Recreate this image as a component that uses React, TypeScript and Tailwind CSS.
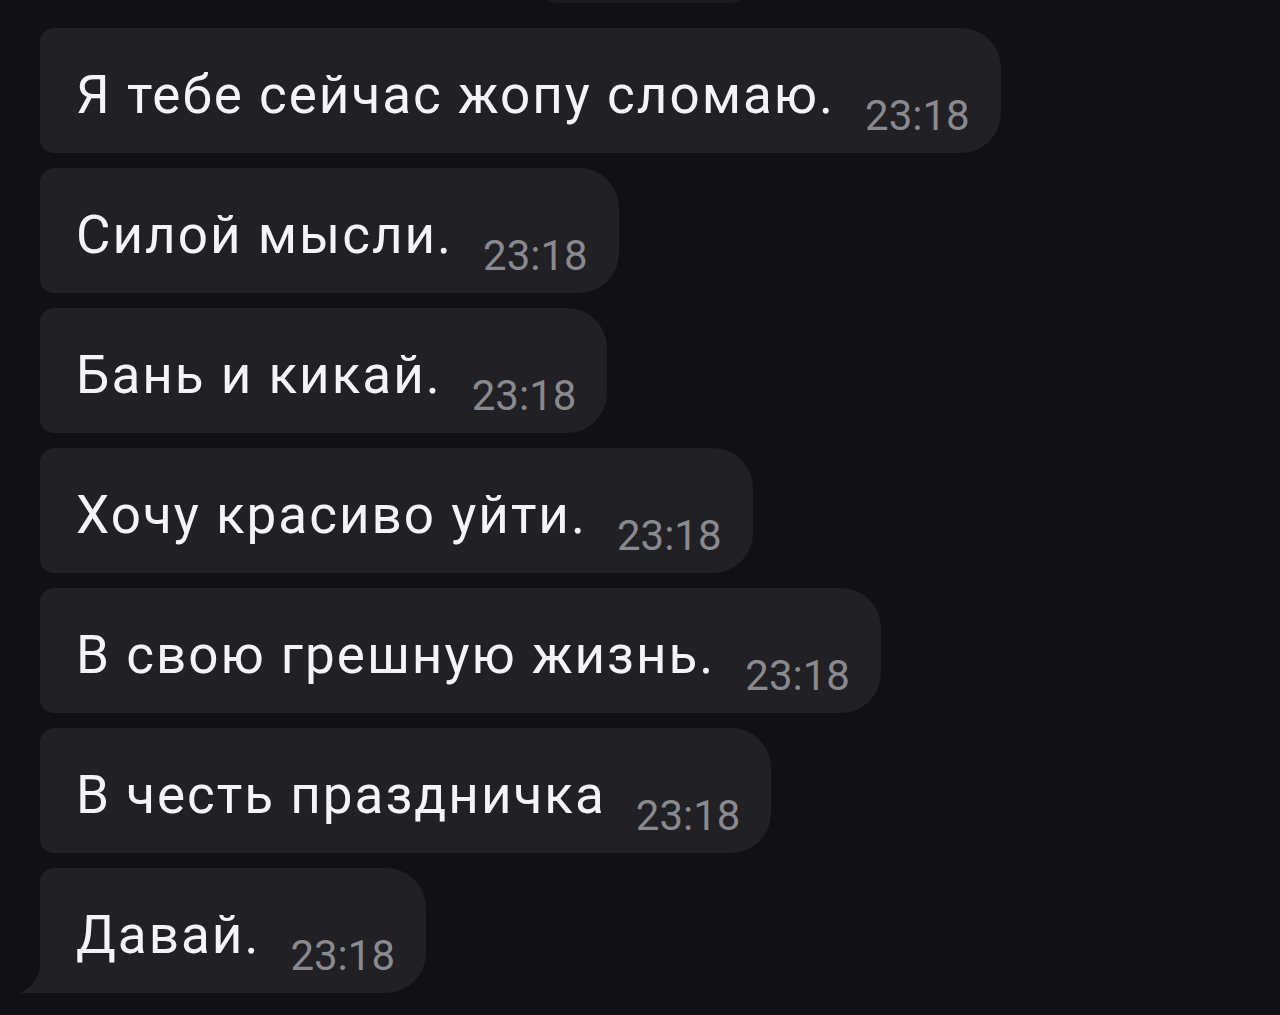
const messages = [
  "Я тебе сейчас жопу сломаю.",
  "Силой мысли.",
  "Бань и кикай.",
  "Хочу красиво уйти.",
  "В свою грешную жизнь.",
  "В честь праздничка",
  "Давай.",
];

const Bubble = function ({ text, last }: { text: string; last: boolean }) {
  return (
    <div className="relative self-start">
      <div
        className={
          "flex items-start h-[125px] pl-[36px] pr-[31px] bg-[#212024] rounded-r-[40px] rounded-tl-[14px] " +
          (last ? "rounded-bl-none" : "rounded-bl-[14px]")
        }
      >
        <span className="pt-[41px] text-[53px] leading-none tracking-[2px] text-[#f4f4f6] whitespace-nowrap">{text}</span>
        <span className="pt-[67px] ml-[30px] text-[42px] leading-none text-[#8a898f] whitespace-nowrap">23:18</span>
      </div>
      {last && (
        // tail of the last bubble in the group
        <svg className="absolute left-[-20px] bottom-0" width="22" height="40" viewBox="0 0 22 40">
          <path d="M20 0 L22 0 L22 40 L0 40 C10 36 20 26 20 10 Z" fill="#212024" />
        </svg>
      )}
    </div>
  );
};

export default function App() {
  return (
    <div className="w-[1280px] h-[1015px] overflow-hidden bg-[#111014] font-['Roboto',sans-serif]">
      <div className="ml-[538px] w-[212px] h-[40px] -mt-[37px] rounded-full bg-[#1c1b1f]" />
      <div className="flex flex-col gap-[15px] pt-[25px] pl-[40px]">
        {messages.map((m, i) => (
          <Bubble key={i} text={m} last={i === messages.length - 1} />
        ))}
      </div>
    </div>
  );
}
